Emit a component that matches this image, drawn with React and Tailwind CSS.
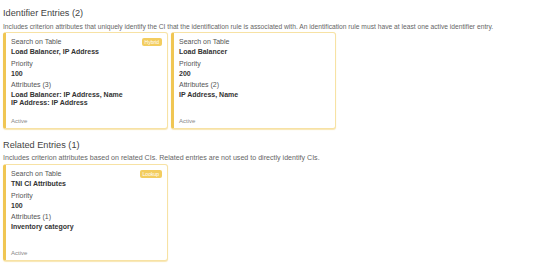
const identifierEntries = [
  {
    table: 'Load Balancer, IP Address',
    priority: 100,
    attrCount: 3,
    attributes: ['Load Balancer: IP Address, Name', 'IP Address: IP Address'],
    badge: 'Hybrid',
  },
  {
    table: 'Load Balancer',
    priority: 200,
    attrCount: 2,
    attributes: ['IP Address, Name'],
  },
];

const relatedEntries = [
  {
    table: 'TNI CI Attributes',
    priority: 100,
    attrCount: 1,
    attributes: ['Inventory category'],
    badge: 'Lookup',
  },
];

const EntryCard = ({ entry }) => (
  <div className="relative flex flex-col w-[165px] h-[97px] bg-white rounded-[3px] border border-[#f7e2a4] border-l-[3px] border-l-[#f0c653] shadow-[0_1px_1px_rgba(240,198,83,0.45)] pl-[5px] pr-[4px] pt-[4px] pb-[3px]">
    {entry.badge && (
      <span className="absolute top-[5px] right-[5px] h-[8px] px-[3px] rounded-[2px] bg-[#f3cd5f] text-white text-[5px] leading-[8px]">
        {entry.badge}
      </span>
    )}
    <p className="text-[7px] leading-[10px] text-[#555]">Search on Table</p>
    <p className="text-[7px] leading-[10px] font-bold text-[#333]">{entry.table}</p>
    <p className="text-[7px] leading-[10px] text-[#555] mt-[1.5px]">Priority</p>
    <p className="text-[7px] leading-[10px] font-bold text-[#333]">{entry.priority}</p>
    <p className="text-[7px] leading-[10px] text-[#555] mt-[1px]">
      Attributes ({entry.attrCount})
    </p>
    <div className="mt-[1.5px]">
      {entry.attributes.map((a) => (
        <p key={a} className="text-[7px] leading-[8px] font-bold text-[#333]">
          {a}
        </p>
      ))}
    </div>
    <p className="mt-auto text-[6px] leading-[8px] text-[#888]">Active</p>
  </div>
);

// descSize: the second intro line renders a touch larger in the reference
const Section = ({ title, description, descSize, entries }) => (
  <div>
    <h2 className="text-[9.2px] leading-[12px] text-[#444]">{title}</h2>
    <p className={`${descSize} leading-[9px] text-[#666] mt-[3px] whitespace-nowrap`}>
      {description}
    </p>
    <div className="flex gap-[3px] mt-[1px]">
      {entries.map((entry, i) => (
        <EntryCard key={i} entry={entry} />
      ))}
    </div>
  </div>
);

export default function App() {
  return (
    <div
      className="w-[545px] h-[270px] bg-white pl-[3px] pt-[7px] overflow-hidden"
      style={{ fontFamily: '"Liberation Sans", Arial, sans-serif' }}
    >
      <Section
        title="Identifier Entries (2)"
        description="Includes criterion attributes that uniquely identify the CI that the identification rule is associated with. An identification rule must have at least one active identifier entry."
        descSize="text-[6.7px]"
        entries={identifierEntries}
      />
      <div className="mt-[10px]">
        <Section
          title="Related Entries (1)"
          description="Includes criterion attributes based on related CIs. Related entries are not used to directly identify CIs."
          descSize="text-[7.1px]"
          entries={relatedEntries}
        />
      </div>
    </div>
  );
}
